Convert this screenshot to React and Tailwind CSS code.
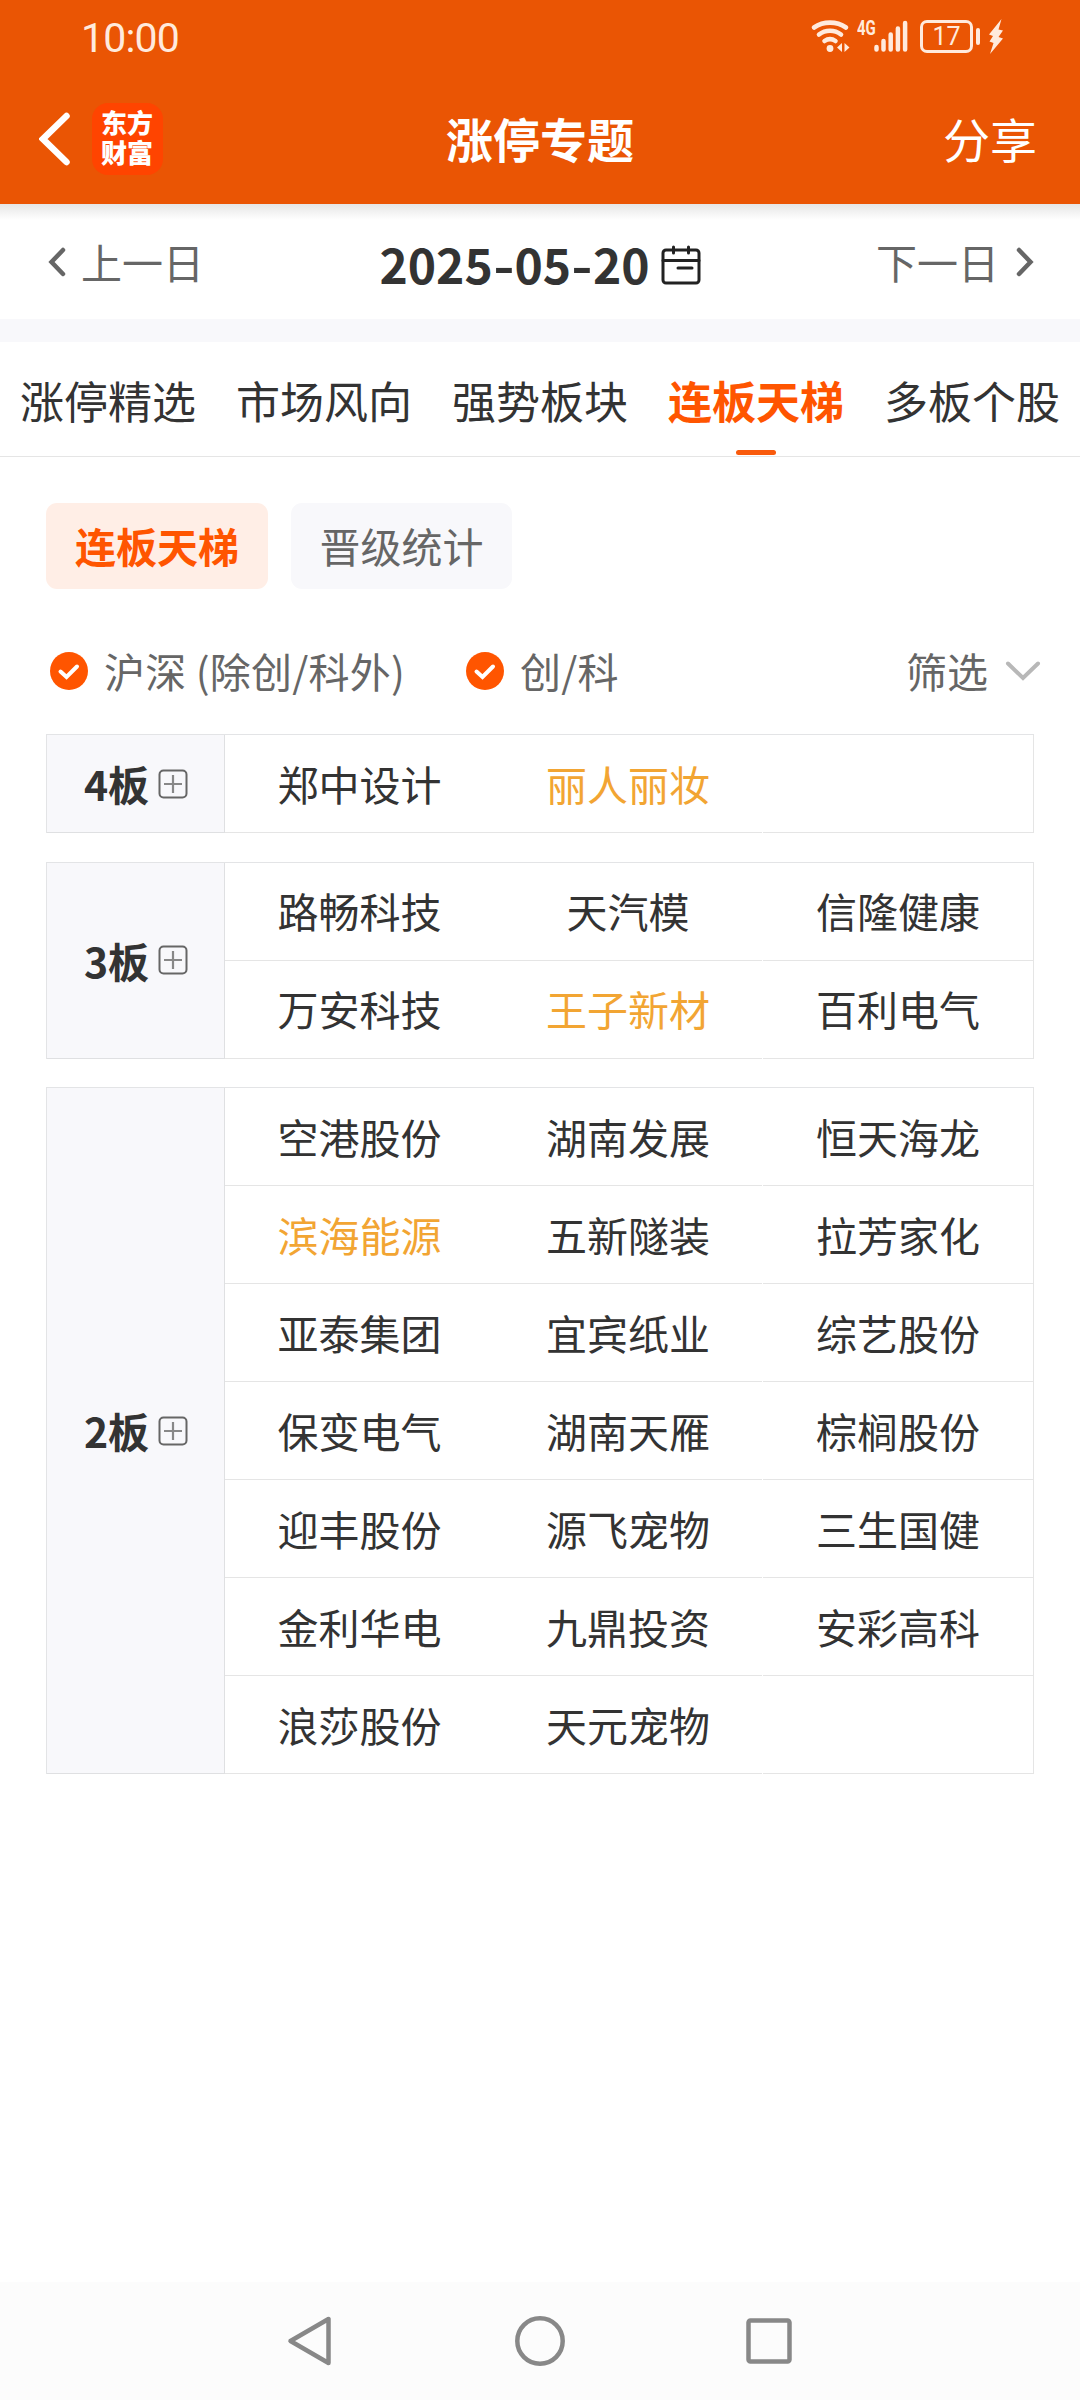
import { useState } from "react";

const TABS = ["涨停精选", "市场风向", "强势板块", "连板天梯", "多板个股"];

const GROUPS = [
  {
    level: "4",
    rows: [["郑中设计", "丽人丽妆", ""]],
  },
  {
    level: "3",
    rows: [
      ["路畅科技", "天汽模", "信隆健康"],
      ["万安科技", "王子新材", "百利电气"],
    ],
  },
  {
    level: "2",
    rows: [
      ["空港股份", "湖南发展", "恒天海龙"],
      ["滨海能源", "五新隧装", "拉芳家化"],
      ["亚泰集团", "宜宾纸业", "综艺股份"],
      ["保变电气", "湖南天雁", "棕榈股份"],
      ["迎丰股份", "源飞宠物", "三生国健"],
      ["金利华电", "九鼎投资", "安彩高科"],
      ["浪莎股份", "天元宠物", ""],
    ],
  },
];

// Stocks shown in yellow
const MARKED = ["丽人丽妆", "王子新材", "滨海能源"];

const StatusBar = () => (
  <div className="flex h-[76px] items-start pl-[81px] pr-[76px] text-[#ffeadd]">
    <span className="mt-[14px] font-[Roboto] text-[41px] leading-[48px] tracking-[-0.8px]">
      10:00
    </span>
    <div className="ml-auto mt-[18px] flex h-[38px]">
      {/* Wifi */}
      <svg className="h-[38px] w-[44px]" viewBox="0 0 44 38" fill="none">
        <g stroke="currentColor" strokeWidth="4.600" strokeLinecap="round">
          <path d="M4 9.5C13.5 3 26.5 3 36 9.5" />
          <path d="M9 16.500C15.5 11.500 24.5 11.500 31 16.500" />
          <path d="M14.5 23C18 20.500 22 20.500 25.500 23" />
        </g>
        <circle cx="20" cy="30.500" r="3.400" fill="currentColor" />
        <path
          d="M27 29.500L32 25V34ZM39.500 29.500L34.500 25V34Z"
          fill="currentColor"
        />
      </svg>
      <span className="ml-[3px] w-[17px] origin-left scale-x-75 text-[20px] leading-[20px] font-bold font-[Roboto]">
        4G
      </span>
      {/* Signal */}
      <svg className="h-[38px] w-[34px]" viewBox="0 0 34 38" fill="none">
        <path
          d="M2.500 29V31.500M9.500 23V31.500M16.700 16.500V31.500M23.900 10.500V31.500M31.100 5V31.500"
          stroke="currentColor"
          strokeWidth="4.500"
          strokeLinecap="round"
        />
      </svg>
      {/* Battery */}
      <div className="ml-[12px] mt-[2px] flex h-[33px] w-[53px] items-center justify-center rounded-[7px] border-3 border-current font-[Roboto] text-[25px] leading-none">
        17
      </div>
      <div className="ml-[3px] mt-[10px] h-[17px] w-[4px] rounded-[2px] bg-current" />
      <svg className="ml-[8px] h-[38px] w-[16px]" viewBox="0 0 16 38">
        <path
          d="M13.500 1L1 16.500L5 18L1.500 23.500L5.500 25L2 36L15 20.500L10.500 19L15 12.500L10.500 11.500Z"
          fill="currentColor"
        />
      </svg>
    </div>
  </div>
);

const NavBar = () => (
  <div className="flex h-[128px] items-center pb-[3px] text-white">
    <div className="flex w-[360px] items-center pl-[39px]">
      <svg className="h-[54px] w-[32px]" viewBox="0 0 32 54" fill="none">
        <path
          d="M27.500 4L4 27L27.500 50"
          stroke="currentColor"
          strokeWidth="6.500"
          strokeLinecap="round"
          strokeLinejoin="miter"
        />
      </svg>
      <div className="ml-[21px] flex h-[72px] w-[71px] items-center justify-center rounded-[16px] bg-[#ff4400] pb-[3px] text-[26px] leading-[30px] font-black">
        <p className="w-[53px] break-all">东方财富</p>
      </div>
    </div>
    <h1 className="flex-1 pb-[1px] text-center text-[47px] leading-[60px] font-bold">
      涨停专题
    </h1>
    <span className="w-[360px] pr-[43px] pb-[1px] text-right text-[47px] leading-[60px]">
      分享
    </span>
  </div>
);

const Chevron = ({ className = "" }) => (
  <svg className={className} viewBox="0 0 18 30" fill="none">
    <path
      d="M15 3L3.500 15L15 27"
      stroke="currentColor"
      strokeWidth="4.500"
      strokeLinecap="round"
    />
  </svg>
);

const DateDash = () => (
  <span className="mx-[2px] inline-block scale-x-120">-</span>
);

const DateBar = () => (
  <div className="flex h-[115px] items-center bg-linear-to-b from-[#e6e6e6] via-white via-[14%] to-white px-[46px] text-[41px] leading-[50px] text-[#666]">
    <div className="flex w-[260px] items-center pl-[2px]">
      <Chevron className="h-[30px] w-[18px]" />
      <span className="ml-[15px] pb-[2px]">上一日</span>
    </div>
    <div className="flex flex-1 items-center justify-center text-[#333]">
      <span className="mt-[3px] text-[48px] font-bold">
        2025
        <DateDash />
        05
        <DateDash />
        20
      </span>
      <svg className="mt-[7px] ml-[11px] h-[40px] w-[40px]" viewBox="0 0 40 40" fill="none">
        <g stroke="#222" strokeWidth="3" strokeLinecap="round">
          <rect x="2" y="5" width="36" height="33" rx="3" />
          <path d="M2 15.500H38M17 23H31M12.500 2V8M27.500 2V8" />
        </g>
      </svg>
    </div>
    <div className="flex w-[260px] items-center justify-end">
      <span className="mr-[17px] pb-[2px]">下一日</span>
      <Chevron className="h-[30px] w-[18px] rotate-180" />
    </div>
  </div>
);

const CheckItem = ({ label, checked, onClick }) => (
  <button type="button" className="flex items-center" onClick={onClick}>
    <svg className="h-[40px] w-[40px]" viewBox="0 0 40 40" fill="none">
      <circle cx="20" cy="20" r="19" fill={checked ? "#ff5500" : "#ddd"} />
      <path
        d="M11.500 20.500L17.500 26L28 15.500"
        stroke="white"
        strokeWidth="4"
        strokeLinecap="round"
      />
    </svg>
    <span className="ml-[15px] pb-[2px] tracking-[0.2px]">{label}</span>
  </button>
);

const GroupTable = ({ group }) => (
  <div className="flex border-t border-l border-[#e3e4e6]">
    <div className="flex w-[178px] items-center justify-center border-r border-b border-[#dfe0e2] bg-[#f8f8fb] pl-[1px] text-[#333]">
      <span className="pb-[1px] text-[41px] leading-[50px] font-bold">
        {group.level}板
      </span>
      <svg className="ml-[9px] h-[30px] w-[30px]" viewBox="0 0 30 30" fill="none">
        <rect x="1.500" y="1.500" width="27" height="27" rx="4" stroke="#666" strokeWidth="2" />
        <path d="M6 15H24M15 6V24" stroke="#888" strokeWidth="2.200" />
      </svg>
    </div>
    <div className="flex-1 border-r border-[#e5e5e5]">
      {group.rows.map((row, i) => (
        <div key={i} className="grid h-[98px] grid-cols-[269px_268px_1fr]">
          {row.map((name, j) => (
            <div
              key={j}
              className={`flex items-center justify-center border-b border-[#e5e5e5] pb-[2px] text-[41px] leading-[50px] ${
                j === 2 ? "ml-px" : ""
              } ${MARKED.includes(name) ? "text-[#f2a533]" : "text-[#333]"}`}
            >
              {name}
            </div>
          ))}
        </div>
      ))}
    </div>
  </div>
);

export default function App() {
  const [tab, setTab] = useState("连板天梯");
  const [main, setMain] = useState(true);
  const [growth, setGrowth] = useState(true);

  return (
    <div className="flex h-[2400px] w-[1080px] flex-col overflow-hidden bg-white font-['Noto_Sans_CJK_SC',sans-serif]">
      <header className="bg-[#ea5504]">
        <StatusBar />
        <NavBar />
      </header>

      <DateBar />
      <div className="h-[23px] bg-[#f8f8fb]" />

      {/* Tabs */}
      <nav className="flex h-[115px] gap-[40px] border-b border-[#e5e5e5] pl-[20px] text-[44px] leading-[60px]">
        {TABS.map((name) => (
          <button
            key={name}
            type="button"
            onClick={() => setTab(name)}
            className={`flex w-[176px] flex-col items-center whitespace-nowrap pt-[28px] ${
              tab === name ? "font-bold text-[#ff5500]" : "text-[#333]"
            }`}
          >
            {name}
            {tab === name && (
              <span className="mt-[20px] h-[5px] w-[40px] rounded-full bg-[#f95a0c]" />
            )}
          </button>
        ))}
      </nav>

      <main className="flex-1 px-[46px] pt-[46px] text-[41px] leading-[50px]">
        <div className="flex gap-[23px]">
          <button className="h-[86px] w-[222px] rounded-[11px] bg-[#ffeee6] pb-[2px] font-bold text-[#ff5500]">
            连板天梯
          </button>
          <button className="h-[86px] w-[221px] rounded-[11px] bg-[#f8f8fb] pb-[2px] text-[#666]">
            晋级统计
          </button>
        </div>

        <div className="mt-[57px] flex h-[50px] items-center pl-[3px] text-[#666]">
          <CheckItem
            label="沪深 (除创/科外)"
            checked={main}
            onClick={() => setMain(!main)}
          />
          <div className="ml-[60px]">
            <CheckItem
              label="创/科"
              checked={growth}
              onClick={() => setGrowth(!growth)}
            />
          </div>
          <button type="button" className="-mr-[7px] ml-auto flex items-center">
            <span className="pb-[2px]">筛选</span>
            <svg className="ml-[17px] h-[20px] w-[36px]" viewBox="0 0 36 20" fill="none">
              <path
                d="M3 2.500L18 17L33 2.500"
                stroke="#b8b8b8"
                strokeWidth="4"
                strokeLinecap="round"
              />
            </svg>
          </button>
        </div>

        <div className="mt-[38px] flex flex-col gap-[28.600px]">
          {GROUPS.map((group) => (
            <GroupTable key={group.level} group={group} />
          ))}
        </div>
      </main>

      {/* System navigation */}
      <footer className="flex h-[118px] items-start justify-between bg-[#fcfcfc] pt-[33px] pr-[286px] pl-[286px]">
        <svg className="h-[52px] w-[48px]" viewBox="0 0 48 52" fill="none">
          <path d="M42.500 4V48L4.500 26Z" stroke="#888" strokeWidth="4.500" strokeLinejoin="round" />
        </svg>
        <svg className="h-[52px] w-[52px]" viewBox="0 0 52 52" fill="none">
          <circle cx="26" cy="26" r="22.700" stroke="#888" strokeWidth="4.500" />
        </svg>
        <svg className="h-[52px] w-[48px]" viewBox="0 0 48 52" fill="none">
          <rect x="2.500" y="5.500" width="41" height="41" rx="2" stroke="#888" strokeWidth="4.500" />
        </svg>
      </footer>
    </div>
  );
}
